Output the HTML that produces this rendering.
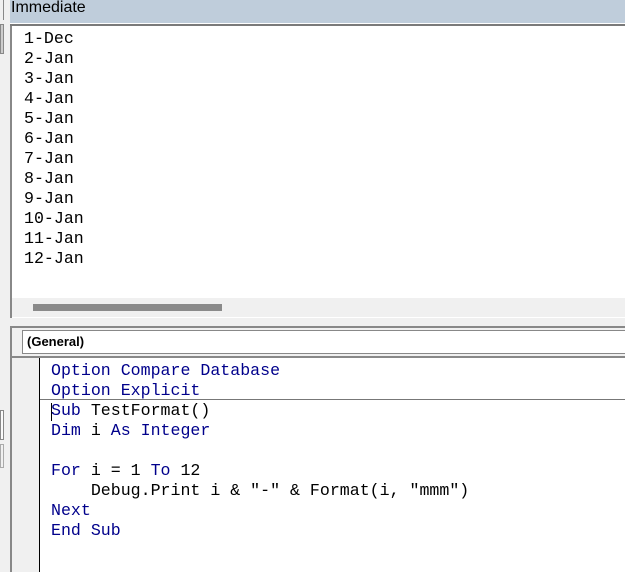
<!DOCTYPE html><html><head><style>
body{margin:0;width:625px;height:572px;overflow:hidden;background:#f0f0f0;position:relative;font-family:"Liberation Sans",sans-serif}
div{position:absolute;box-sizing:border-box}
.mono{font-family:"Liberation Mono",monospace;font-size:16.6px;line-height:20px;white-space:pre}
.k{color:#00008b}
</style></head><body>
<div style="left:0;top:0;width:10px;height:572px;background:#f0f0f0"></div>
<div style="left:0;top:0;width:4px;height:20px;border-right:1px solid #888"></div>
<div style="left:0;top:24px;width:4px;height:30px;background:#ccc;border:1px solid #888"></div>
<div style="left:0;top:410px;width:4px;height:30px;border:1px solid #888;background:#fafafa"></div>
<div style="left:0;top:444px;width:4px;height:24px;border:1px solid #aaa"></div>
<div style="left:10px;top:0;width:615px;height:23px;background:#bfcddb;font-size:16px;line-height:16px;padding-left:1px;color:#000">Immediate</div>
<div style="left:10px;top:23px;width:615px;height:3px;border-top:1px solid #fff;border-bottom:2px solid #7a7a7a"></div>
<div style="left:10px;top:26px;width:2px;height:292px;background:#888"></div>
<div style="left:12px;top:26px;width:613px;height:272px;background:#fff"></div>
<div class="mono" style="left:24px;top:29px;color:#000">1-Dec
2-Jan
3-Jan
4-Jan
5-Jan
6-Jan
7-Jan
8-Jan
9-Jan
10-Jan
11-Jan
12-Jan</div>
<div style="left:12px;top:298px;width:613px;height:20px;background:#f0f0f0;border-bottom:1px solid #fff"></div>
<div style="left:33px;top:304px;width:189px;height:7px;background:#8a8a8a"></div>
<div style="left:10px;top:326px;width:615px;height:246px;border-top:2px solid #888;border-left:2px solid #888;background:#f0f0f0"></div>
<div style="left:22px;top:330px;width:603px;height:24px;background:#fff;border:1px solid #888;border-right:none;font-size:13px;font-weight:bold;line-height:22px;padding-left:4px">(General)</div>
<div style="left:12px;top:356px;width:613px;height:216px;border-top:2px solid #888;background:#f0f0f0"></div>
<div style="left:39px;top:358px;width:586px;height:214px;background:#fff;border-left:1px solid #000"></div>
<div style="left:40px;top:399px;width:585px;height:1px;background:#777"></div>
<div style="left:51px;top:403px;width:1px;height:18px;background:#000"></div>
<div class="mono" style="left:51px;top:361px;color:#000"><span class="k">Option Compare Database</span>
<span class="k">Option Explicit</span>
<span class="k">Sub</span> TestFormat()
<span class="k">Dim</span> i <span class="k">As Integer</span>

<span class="k">For</span> i = 1 <span class="k">To</span> 12
    Debug.Print i &amp; "-" &amp; Format(i, "mmm")
<span class="k">Next</span>
<span class="k">End Sub</span></div>
</body></html>
